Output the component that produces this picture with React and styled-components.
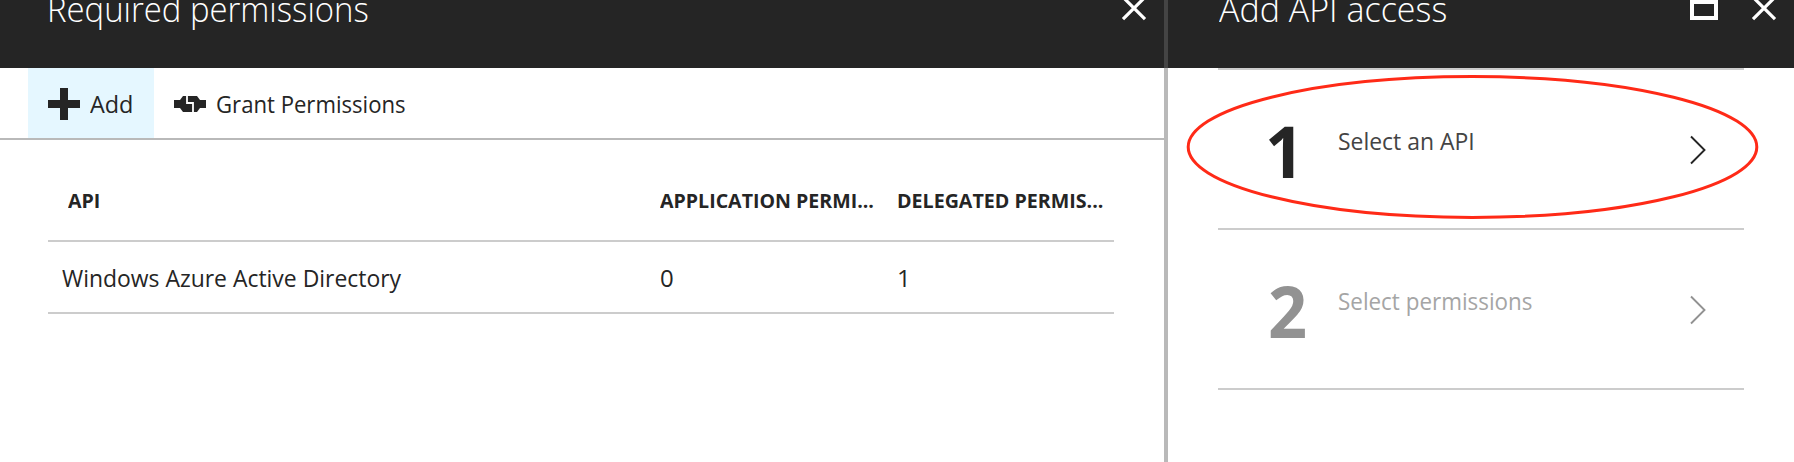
import React from "react";
import styled, { createGlobalStyle } from "styled-components";

const GlobalStyle = createGlobalStyle`
  * { box-sizing: border-box; }
  body {
    margin: 0;
    background: #fff;
    color: #252525;
    font-family: "Segoe UI", "Open Sans", "Noto Sans", sans-serif;
    font-size: 24px;
    overflow: hidden;
  }
  button { font: inherit; color: inherit; border: 0; background: none; padding: 0; }
`;

const Page = styled.div`
  display: flex;
  width: 1794px;
  height: 462px;
  overflow: hidden;
`;

const Blade = styled.section`
  display: flex;
  flex-direction: column;
  width: ${(p) => p.$width}px;
  flex: none;
`;

const Divider = styled.div`
  width: 4px;
  flex: none;
  background: linear-gradient(#444 68px, #b9b9b9 68px);
`;

const BladeHeader = styled.header`
  display: flex;
  justify-content: space-between;
  height: 68px;
  flex: none;
  padding: 0 ${(p) => p.$right}px 0 ${(p) => p.$left}px;
  background: #252525;
  color: #fff;
`;

const Label = styled.span`
  display: block;
  white-space: nowrap;
  line-height: 32px;
  transform: scaleX(${(p) => p.$fit || 1});
  transform-origin: 0 50%;
`;

const Title = styled(Label).attrs({ as: "h1" })`
  margin: -11px 0 0;
  font-size: 35px;
  font-weight: 340;
  line-height: 40px;
`;

const WindowControls = styled.div`
  display: flex;
  gap: 34px;
  margin-top: -8px;
  height: 28px;
`;

const Icon = styled.svg`
  display: block;
  flex: none;
  overflow: visible;
`;

const Toolbar = styled.div`
  display: flex;
  height: 72px;
  padding-left: 28px;
  border-bottom: 2px solid #b9b9b9;
`;

const Command = styled.button`
  display: flex;
  align-items: center;
  gap: 10px;
  width: ${(p) => p.$width}px;
  padding: 2px 0 0 20px;
  background: ${(p) => (p.$active ? "#e5f7ff" : "transparent")};
`;

const Table = styled.div`
  margin: 0 50px 0 48px;
`;

const Row = styled.div`
  display: grid;
  grid-template-columns: 612px 237px 1fr;
  align-items: center;
  height: 72px;
  padding-top: 2px;
  border-bottom: 2px solid #ccc;
`;

const HeadRow = styled(Row)`
  height: 102px;
  padding: 22px 0 0;
  font-size: 20px;
  font-weight: 700;
`;

const Cell = styled.div`
  padding-left: ${(p) => p.$pad || 0}px;
`;

const Steps = styled.div`
  position: relative;
  margin: 0 50px;
  border-top: 2px solid #ccc;
`;

const Step = styled.div`
  display: flex;
  height: 160px;
  padding: 0 37px 0 49px;
  border-bottom: 2px solid #ccc;
  color: ${(p) => (p.$disabled ? "#929292" : "#252525")};
`;

const StepNumber = styled(Label)`
  width: 71px;
  font-size: 72px;
  font-weight: 700;
  line-height: 160px;
  text-indent: ${(p) => p.$indent || 0}px;
`;

const StepLabel = styled(Label)`
  flex: 1;
  margin-top: 55px;
  color: ${(p) => (p.$disabled ? "#a5a5a5" : "#444")};
`;

const StepArrow = styled(Icon)`
  margin-top: 65px;
`;

const Highlight = styled(Icon)`
  position: absolute;
  left: -33px;
  top: 4px;
  pointer-events: none;
`;

const CloseIcon = () => (
  <Icon width="24" height="28" viewBox="0 0 24 28" fill="none" stroke="#fff" strokeWidth="3.2">
    <path d="M1 5.2 23 27.2M23 5.2 1 27.2" />
  </Icon>
);

const MaximizeIcon = () => (
  <Icon width="28" height="28" viewBox="0 0 28 28">
    <path fill="#fff" fillRule="evenodd" d="M0 4h28v24H0zM4 12v12h20V12z" />
  </Icon>
);

const PlusIcon = () => (
  <Icon width="32" height="32" viewBox="0 0 32 32">
    <path fill="#252525" d="M12 0h8v12h12v8H20v12h-8V20H0v-8h12z" />
  </Icon>
);

const HandshakeIcon = () => (
  <Icon width="32" height="16" viewBox="0 0 32 16">
    <path fill="#252525" d="M0 4h6L9 0h14l3 4h6v8h-6l-3 4H9l-3-4H0z" />
    <path fill="none" stroke="#fff" strokeWidth="1.8" d="M13 0v7h6v9" />
  </Icon>
);

const steps = [
  { n: 1, text: "Select an API", fit: 0.955, indent: -2 },
  { n: 2, text: "Select permissions", fit: 0.934, indent: 1, disabled: true },
];

export default function App() {
  return (
    <>
      <GlobalStyle />
      <Page>
        <Blade $width={1164}>
          <BladeHeader $left={47} $right={18}>
            <Title $fit={0.939}>Required permissions</Title>
            <WindowControls>
              <CloseIcon />
            </WindowControls>
          </BladeHeader>
          <Toolbar>
            <Command $active $width={126}>
              <PlusIcon />
              <Label $fit={0.975}>Add</Label>
            </Command>
            <Command $width={260}>
              <HandshakeIcon />
              <Label $fit={0.922}>Grant Permissions</Label>
            </Command>
          </Toolbar>
          <Table>
            <HeadRow>
              <Cell $pad={20}><Label $fit={0.98}>API</Label></Cell>
              <Cell><Label $fit={0.979}>APPLICATION PERMI...</Label></Cell>
              <Cell><Label $fit={0.982}>DELEGATED PERMIS...</Label></Cell>
            </HeadRow>
            <Row>
              <Cell $pad={14}><Label $fit={0.955}>Windows Azure Active Directory</Label></Cell>
              <Cell><Label>0</Label></Cell>
              <Cell><Label>1</Label></Cell>
            </Row>
          </Table>
        </Blade>
        <Divider />
        <Blade $width={626}>
          <BladeHeader $left={51} $right={18}>
            <Title $fit={0.972}>Add API access</Title>
            <WindowControls>
              <MaximizeIcon />
              <CloseIcon />
            </WindowControls>
          </BladeHeader>
          <Steps>
            {steps.map((s) => (
              <Step key={s.n} $disabled={s.disabled}>
                <StepNumber $fit={0.95} $indent={s.indent}>{s.n}</StepNumber>
                <StepLabel $fit={s.fit} $disabled={s.disabled}>{s.text}</StepLabel>
                <StepArrow width="17" height="30" viewBox="0 0 17 30" fill="none" stroke="currentColor" strokeWidth="1.9">
                  <path d="M1 1.5 14.5 15 1 28.5" />
                </StepArrow>
              </Step>
            ))}
            <Highlight width="574" height="146" viewBox="0 0 574 146">
              <ellipse cx="287.5" cy="73" rx="284.3" ry="70.4" fill="none" stroke="#ff2a17" strokeWidth="3" />
            </Highlight>
          </Steps>
        </Blade>
      </Page>
    </>
  );
}
